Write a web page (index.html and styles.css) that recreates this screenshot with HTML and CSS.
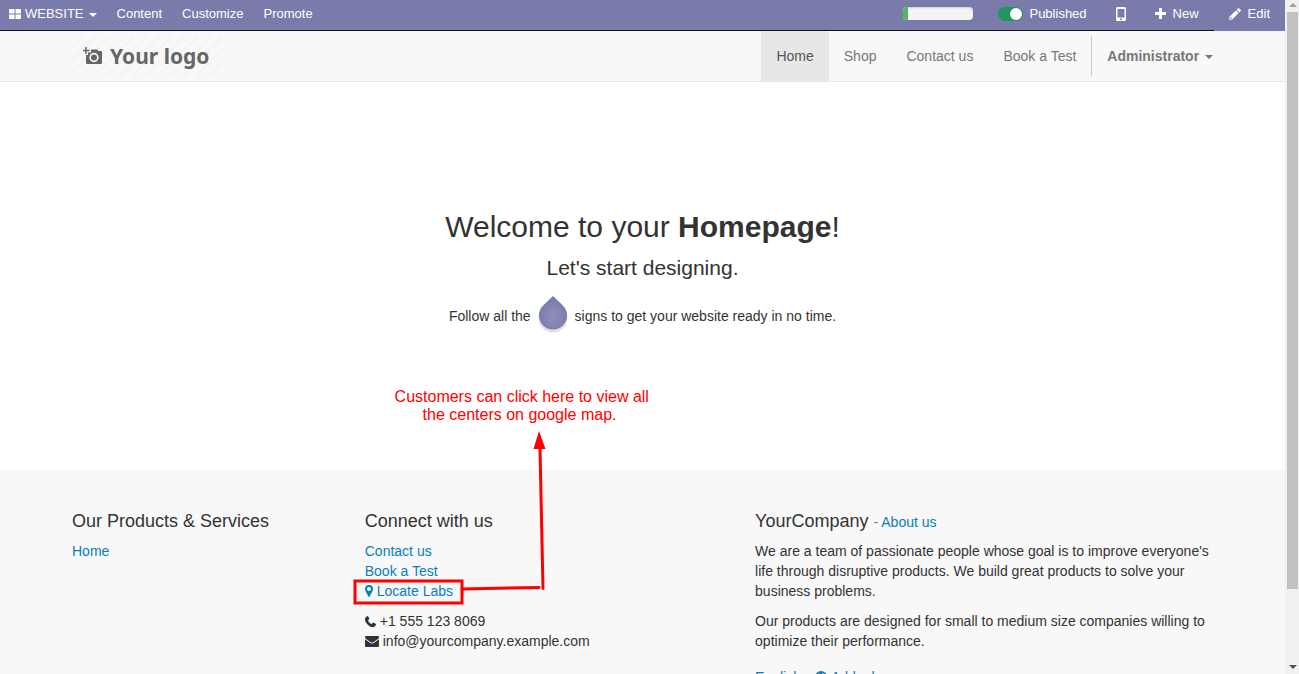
FILE: index.html
```html
<!DOCTYPE html>
<html lang="en">
<head>
<meta charset="utf-8">
<title>Homepage | YourCompany</title>
<link rel="stylesheet" href="styles.css">
</head>
<body>
<div class="window">
  <div class="page">
    <nav class="topbar" aria-label="Website tools">
      <div class="topbar-main">
        <button class="tool tool-first" type="button">
          <svg class="icon-grid" width="12" height="10" viewBox="0 0 12 10"><path fill="#fff" d="M1 0h4.500v4.500H0V1a1 1 0 0 1 1-1zM6.500 0H11a1 1 0 0 1 1 1v3.500H6.500zM0 5.500h5.500V10H1a1 1 0 0 1-1-1zM6.500 5.500H12V9a1 1 0 0 1-1 1H6.500z"/></svg>
          <span>WEBSITE</span>
          <span class="caret caret-gap"></span>
        </button>
        <button class="tool" type="button">Content</button>
        <button class="tool" type="button">Customize</button>
        <button class="tool" type="button">Promote</button>
        <span class="spacer"></span>
        <span class="progress"><span class="progress-bar"></span></span>
        <label class="publish"><input class="switch" type="checkbox" checked>Published</label>
        <button class="tool tool-icon" type="button" aria-label="Mobile preview">
          <svg width="10" height="14" viewBox="0 0 10 14"><path fill="#fff" fill-rule="evenodd" d="M1.500 0h7A1.500 1.500 0 0 1 10 1.500v11A1.500 1.500 0 0 1 8.500 14h-7A1.500 1.500 0 0 1 0 12.500v-11A1.500 1.500 0 0 1 1.500 0zM1.500 2v8.500h7V2zM5 11.300a1 1 0 1 0 0 2 1 1 0 0 0 0-2z"/></svg>
        </button>
        <button class="tool tool-wide" type="button">
          <svg width="11" height="11" viewBox="0 0 11 11"><path fill="#fff" d="M4 .5q0-.5.5-.5h2q.5 0 .5.500V4h3.500q.5 0 .5.500v2q0 .5-.5.500H7v3.500q0 .5-.5.500h-2q-.5 0-.5-.500V7H.5Q0 7 0 6.500v-2Q0 4 .5 4H4z"/></svg>
          <span class="tool-text">New</span>
        </button>
      </div>
      <button class="tool tool-wide" type="button">
        <svg width="12" height="12" viewBox="0 0 12 12"><path fill="#fff" fill-rule="evenodd" d="M8.900.4q.7-.7 1.400 0l1.300 1.300q.7.7 0 1.400L10.300 4.400 7.600 1.700zM6.900 2.400l2.700 2.700L3 11.700H.2V9.100zM1.200 9.600v1.100h1.300l.5-.5L1.700 9z"/></svg>
        <span class="tool-text">Edit</span>
      </button>
    </nav>

    <header class="header">
      <div class="container header-row">
        <a class="logo" href="#">
          <svg width="20" height="19" viewBox="0 0 20 19"><path fill="#666" fill-rule="evenodd" d="M2.200 0h1.500v2.800H6.500v1.500H3.700V7H2.200V4.300H0V2.800h2.200zM8.500 2.500h5.500L15.500 4H18a1 1 0 0 1 1 1v11a1 1 0 0 1-1 1H4a1 1 0 0 1-1-1V8h2V5.500H8V3zM11 5.800a4.700 4.700 0 1 0 0 9.400 4.700 4.700 0 0 0 0-9.400zm0 1.700a3 3 0 1 1 0 6 3 3 0 0 1 0-6z"/></svg>
          <span>Your logo</span>
        </a>
        <nav class="menu" aria-label="Main menu">
          <a class="menu-link active" href="#">Home</a>
          <a class="menu-link" href="#">Shop</a>
          <a class="menu-link" href="#">Contact us</a>
          <a class="menu-link" href="#">Book a Test</a>
          <span class="divider"></span>
          <button class="menu-link user" type="button">Administrator <span class="caret user-caret"></span></button>
        </nav>
      </div>
    </header>

    <main class="hero">
      <h1 class="hero-title">Welcome to your <b>Homepage</b>!</h1>
      <p class="hero-lead">Let's start designing.</p>
      <p class="hero-text">
        <span>Follow all the</span>
        <svg width="32" height="40" viewBox="0 0 32 40"><defs><radialGradient id="violet" cy=".6"><stop offset="0" stop-color="#9090bd"/><stop offset="1" stop-color="#7a7cab"/></radialGradient></defs><ellipse cx="16" cy="22" rx="14.500" ry="14.500" fill="#000" opacity=".12"/><path fill="url(#violet)" d="M16 0l9.900 9.600a14 14 0 1 1-19.800 0z"/></svg>
        <span>signs to get your website ready in no time.</span>
      </p>
    </main>

    <footer class="footer">
      <div class="container columns">
        <section class="column">
          <h2 class="heading">Our Products &amp; Services</h2>
          <ul class="list"><li><a href="#">Home</a></li></ul>
        </section>
        <section class="column">
          <h2 class="heading">Connect with us</h2>
          <ul class="list">
            <li><a href="#">Contact us</a></li>
            <li><a href="#">Book a Test</a></li>
            <li class="locate">
              <a class="icon-line" href="#"><svg width="8" height="12" viewBox="0 0 8 12"><path fill="#0880b7" fill-rule="evenodd" d="M4 0a4 4 0 0 1 4 4c0 1-.3 1.600-.6 2.200L4.700 11.600q-.7.8-1.400 0L.6 6.200C.3 5.600 0 5 0 4a4 4 0 0 1 4-4zm0 2a2 2 0 1 0 0 4 2 2 0 0 0 0-4z"/></svg><span>Locate Labs</span></a>
              <div class="callout">
                <p class="callout-text">Customers can click here to view all the centers on google map.&nbsp;</p>
                <svg class="callout-arrow" width="200" height="180" viewBox="0 0 200 180" fill="none" stroke="#fe0000" stroke-width="3" stroke-linecap="round"><rect x="2" y="152" width="107" height="22"/><path d="M109 160l77-1.500M190 159.500L187 20"/><path fill="#fe0000" stroke="none" d="M186 2l6.500 18h-12z"/></svg>
              </div>
            </li>
          </ul>
          <ul class="list">
            <li class="icon-line"><svg width="11" height="11" viewBox="0 0 11 11"><path fill="#333" d="M2.200.2q.7-.4 1 .2l1 1.900q.3.600-.2 1L3.200 4.200q-.2.300 0 .7Q4.300 6.900 6.200 7.900q.4.200.6-.1L7.700 6.900q.4-.5 1-.2l1.900 1q.6.300.3 1Q10.300 11 8.300 11C4 11 0 7 0 2.900Q0 1 2.200.2z"/></svg><span>+1 555 123 8069</span></li>
            <li class="icon-line"><svg width="14" height="11" viewBox="0 0 14 11"><path fill="#333" d="M1.200 0h11.600Q14 0 14 1.200q0 .9-1.200 1.800L8.700 5.900Q7 7.200 5.300 5.900L1.200 3Q0 2.100 0 1.200 0 0 1.200 0zM0 3.300l4.600 3.300Q7 8.500 9.400 6.600L14 3.300v6.500q0 1.200-1.200 1.200H1.200Q0 11 0 9.800z"/></svg><span>info@yourcompany.example.com</span></li>
          </ul>
        </section>
        <section class="column">
          <h2 class="heading">YourCompany <small class="small">- <a href="#">About us</a></small></h2>
          <p class="para">We are a team of passionate people whose goal is to improve everyone's life through disruptive products. We build great products to solve your business problems.</p>
          <p class="para">Our products are designed for small to medium size companies willing to optimize their performance.</p>
          <div class="languages">
            <a href="#">English</a>
            <a class="icon-line" href="#"><svg width="12" height="12" viewBox="0 0 12 12"><circle cx="6" cy="6" r="6" fill="#0880b7"/><path d="M3 3l2 .5-1 2 1.500 1.500M7.500 2l1.500 2" stroke="#f8f8f8" fill="none"/></svg><span>Add a language...</span></a>
          </div>
        </section>
      </div>
    </footer>
  </div>
  <div class="scrollbar" aria-hidden="true">
    <span class="arrow-up"></span>
    <span class="thumb"></span>
    <span class="track"></span>
    <span class="arrow-down"></span>
  </div>
</div>
</body>
</html>
```
FILE: styles.css
```css
* { box-sizing: border-box; }

body {
  margin: 0;
  color: #333;
  background: #fff;
  font: 14px/20px "Liberation Sans", Arial, sans-serif;
}

h1, h2, p, ul { margin: 0; padding: 0; }
ul { list-style: none; }
a { color: #0880b7; text-decoration: none; }
button { border: 0; background: none; font: inherit; color: inherit; cursor: pointer; }
svg { flex: none; }

.window { display: flex; height: 100vh; overflow: hidden; }
.page { flex: 1; min-width: 0; display: flex; flex-direction: column; }

/* Editor bar */
.topbar {
  flex: none;
  display: flex;
  background: #797caa;
  color: #fff;
  font-size: 13px;
}
.topbar-main {
  flex: 1;
  display: flex;
  align-items: center;
  border-bottom: 1px solid #111;
}
.tool {
  display: flex;
  align-items: center;
  gap: 4px;
  height: 30px;
  padding: 0 10px 3px;
}
.tool-first { padding-left: 9px; }
.tool-wide { padding-left: 15px; padding-right: 15px; gap: 7px; }
.tool-icon { padding-left: 14px; padding-right: 14px; }
.spacer { flex: 1; }
.caret {
  display: inline-block;
  border: 4px solid transparent;
  border-top-color: currentColor;
  border-bottom: 0;
  vertical-align: middle;
}
.caret-gap { margin-left: 1px; margin-top: 3px; }
.progress {
  width: 70px;
  height: 13px;
  margin-bottom: 3px;
  border-radius: 4px;
  overflow: hidden;
  background: #f5f5f5;
  box-shadow: inset 0 1px 2px #ccc;
}
.progress-bar { display: block; width: 5px; height: 100%; background: #4fb95f; }
.publish {
  display: flex;
  align-items: center;
  gap: 6px;
  padding: 0 15px 3px 25px;
}
.switch {
  appearance: none;
  display: flex;
  justify-content: flex-end;
  width: 25px;
  height: 14px;
  margin: 0;
  border: 1px solid #1f9560;
  border-radius: 7px;
  background: #1f9560;
}
.switch::before {
  content: "";
  width: 12px;
  height: 12px;
  border-radius: 50%;
  background: #fff;
}

/* Site header */
.container { width: 100%; max-width: 1171px; margin: 0 auto; }
.header { flex: none; background: #f8f8f8; border-bottom: 1px solid #e7e7e7; }
.header-row { display: flex; justify-content: space-between; align-items: center; padding-left: 15px; }
.logo {
  display: flex;
  align-items: center;
  gap: 7px;
  width: 150px;
  height: 40px;
  padding-left: 11px;
  color: #666;
  font: bold 21px/28px "Noto Sans", sans-serif;
  white-space: nowrap;
  background: repeating-linear-gradient(135deg, #f8f8f8 0 7px, #f3f3f3 7px 9px);
}
.menu { display: flex; align-items: center; }
.menu-link { padding: 15px; line-height: 20px; color: #777; }
.active { background: #e7e7e7; color: #555; }
.divider { width: 1px; height: 40px; background: #ccc; }
.user { font-weight: bold; }
.user-caret { margin-left: 2px; }

/* Welcome block */
.hero { flex: none; padding: 128px 15px 134px; text-align: center; }
.hero-title { font-weight: normal; font-size: 30px; line-height: 34px; }
.hero-lead { margin-top: 9px; font-size: 21px; line-height: 30px; }
.hero-text {
  display: flex;
  justify-content: center;
  align-items: center;
  gap: 6px;
  height: 40px;
  margin-top: 13px;
}

/* Footer */
.footer { flex: 1 0 auto; padding-top: 41px; background: #f8f8f8; }
.columns { display: grid; grid-template-columns: 3fr 4fr 5fr; }
.column { min-width: 0; padding: 0 15px; }
.heading { margin-bottom: 10px; font-weight: normal; font-size: 18px; line-height: 20px; }
.small { font-size: 14px; line-height: 1; color: #777; }
.list, .para { margin-bottom: 10px; }
.icon-line { display: flex; align-items: center; gap: 4px; }
.languages { display: flex; gap: 14px; padding-top: 6px; }

/* Annotation tied to the map link */
.locate { position: relative; }
.callout {
  position: absolute;
  left: -12px;
  bottom: -8px;
  width: 330px;
  color: #fe0000;
  pointer-events: none;
}
.callout-text { width: 260px; margin: 0 0 5px 39px; font-size: 16px; line-height: 18px; text-align: center; }
.callout-arrow { display: block; }

/* Window scrollbar */
.scrollbar {
  flex: none;
  display: flex;
  flex-direction: column;
  align-items: center;
  width: 14px;
  padding: 3px 1px 5px 2px;
  background: #f1f1f1;
}
.arrow-up { border: 4px solid transparent; border-top: 0; border-bottom-color: #a3a3a3; margin-bottom: 5px; }
.thumb { flex: 577; width: 100%; background: #c1c1c1; }
.track { flex: 76; }
.arrow-down { border: 4px solid transparent; border-bottom: 0; border-top-color: #505050; }
```
